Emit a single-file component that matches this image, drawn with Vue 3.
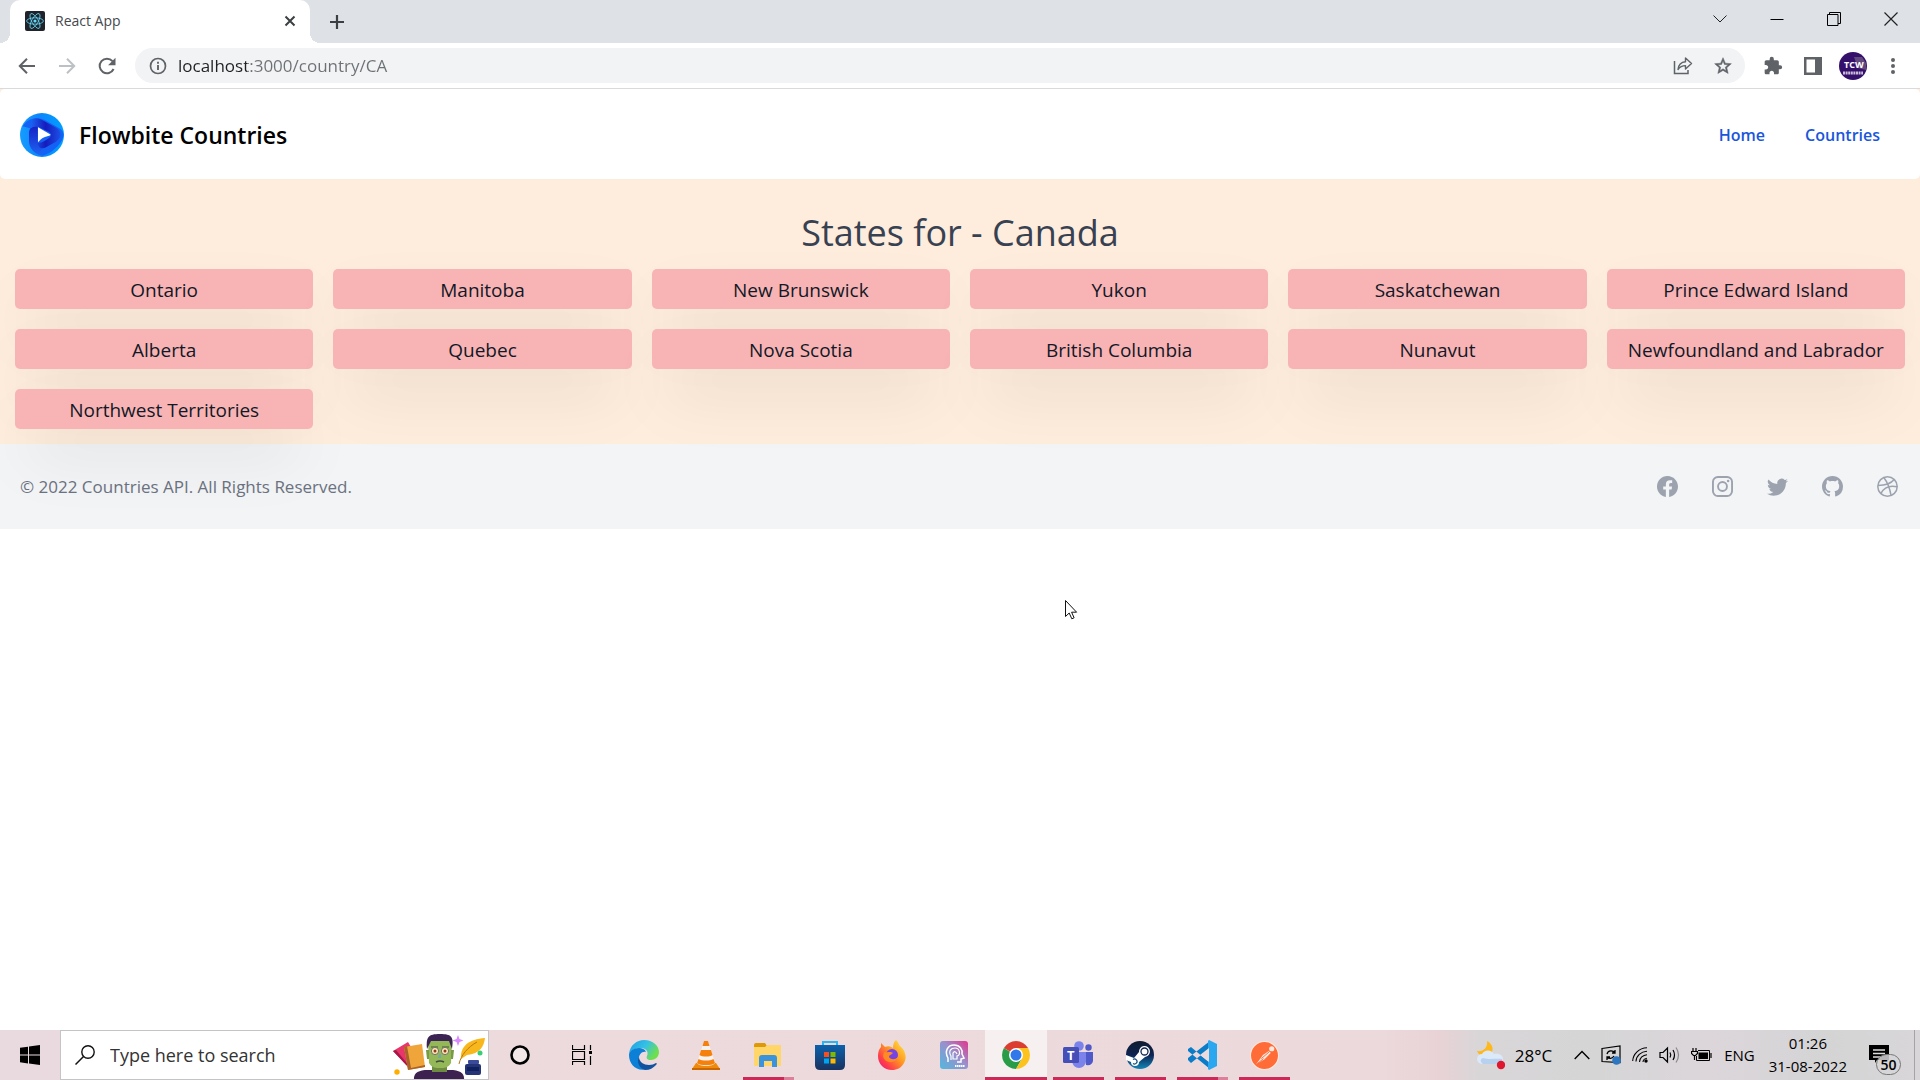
<script setup>
import { ref } from 'vue'

const address = ref('localhost:3000/country/CA')
const query = ref('')

const states = [
  'Ontario', 'Manitoba', 'New Brunswick', 'Yukon', 'Saskatchewan', 'Prince Edward Island',
  'Alberta', 'Quebec', 'Nova Scotia', 'British Columbia', 'Nunavut', 'Newfoundland and Labrador',
  'Northwest Territories',
]
</script>

<template>
  <div class="screen">
    <header class="browser">
      <div class="tabstrip">
        <div class="tab">
          <svg class="favicon" viewBox="0 0 20 20" aria-hidden="true">
            <rect width="20" height="20" rx="2" fill="#20232a" />
            <g fill="none" stroke="#61dafb" stroke-width="0.8">
              <ellipse cx="10" cy="10" rx="8.4" ry="3.2" />
              <ellipse cx="10" cy="10" rx="8.4" ry="3.2" transform="rotate(60 10 10)" />
              <ellipse cx="10" cy="10" rx="8.4" ry="3.2" transform="rotate(120 10 10)" />
            </g>
            <circle cx="10" cy="10" r="1.6" fill="#61dafb" />
          </svg>
          <span class="tab-title">React App</span>
          <button class="plain" aria-label="Close tab">
            <svg width="12" height="12" viewBox="0 0 12 12"><path d="M1.5 1.5l9 9M10.500 1.500l-9 9" stroke="#3c4043" stroke-width="2" /></svg>
          </button>
        </div>
        <button class="plain new-tab" aria-label="New tab">
          <svg width="16" height="16" viewBox="0 0 16 16"><path d="M8 1v14M1 8h14" stroke="#3c4043" stroke-width="2.200" /></svg>
        </button>
        <div class="window-controls">
          <button class="plain" aria-label="Search tabs">
            <svg width="14" height="8" viewBox="0 0 14 8"><path d="M.5.5L7 7 13.500.5" fill="none" stroke="#222" /></svg>
          </button>
          <button class="plain" aria-label="Minimize">
            <svg width="14" height="14" viewBox="0 0 14 14"><path d="M.5 7.500h13" stroke="#000" /></svg>
          </button>
          <button class="plain" aria-label="Restore">
            <svg width="14" height="14" viewBox="0 0 14 14"><path d="M.5 2.500h10.500v11H.5zM2.500 2.500v-2h11v11h-2.500" fill="none" stroke="#000" /></svg>
          </button>
          <button class="plain" aria-label="Close window">
            <svg width="14" height="14" viewBox="0 0 14 14"><path d="M.5.5l13 13M13.500.5l-13 13" stroke="#222" stroke-width="1.200" /></svg>
          </button>
        </div>
      </div>

      <div class="toolbar">
        <div class="nav-buttons">
          <button class="plain" aria-label="Back">
            <svg width="18" height="18" viewBox="0 0 18 18"><path d="M17 9H2.500M9 1.800L1.800 9 9 16.200" fill="none" stroke="#5f6368" stroke-width="2" /></svg>
          </button>
          <button class="plain" aria-label="Forward">
            <svg width="18" height="18" viewBox="0 0 18 18"><path d="M1 9h14.500M9 1.800L16.200 9 9 16.200" fill="none" stroke="#bdc1c6" stroke-width="2" /></svg>
          </button>
          <button class="plain" aria-label="Reload">
            <svg width="18" height="18" viewBox="0 0 18 18">
              <path d="M15.600 12A7.300 7.300 0 1 1 14.500 4.200" fill="none" stroke="#5f6368" stroke-width="2" />
              <path d="M17.500.8v7.400h-7.400z" fill="#5f6368" />
            </svg>
          </button>
        </div>
        <div class="omnibox">
          <svg width="18" height="18" viewBox="0 0 18 18" aria-hidden="true">
            <circle cx="9" cy="9" r="7.500" fill="none" stroke="#5f6368" stroke-width="1.700" />
            <path d="M9 8v5M9 4.800v1.900" stroke="#5f6368" stroke-width="1.900" />
          </svg>
          <input v-model="address" class="address" type="text" aria-label="Address" />
          <button class="plain" aria-label="Share">
            <svg width="20" height="19" viewBox="0 0 20 19">
              <path d="M1.500 5v12.500H15V14" fill="none" stroke="#5f6368" stroke-width="1.500" />
              <path d="M5 13.500c.5-5 3.500-7.500 7.500-7.800V2l6 5.500-6 5.500V9.600c-3.500 0-5.700 1.200-7.500 3.900z" fill="none" stroke="#5f6368" stroke-width="1.400" stroke-linejoin="round" />
            </svg>
          </button>
          <button class="plain" aria-label="Bookmark this tab">
            <svg width="20" height="20" viewBox="0 0 24 24">
              <path d="M22 9.240l-7.190-.62L12 2 9.190 8.630 2 9.240l5.460 4.730L5.820 21 12 17.270 18.180 21l-1.630-7.030L22 9.240zM12 15.400l-3.760 2.270 1-4.280-3.320-2.880 4.380-.38L12 6.100l1.710 4.040 4.380.38-3.320 2.880 1 4.280L12 15.400z" fill="#5f6368" stroke="#5f6368" stroke-width=".6" />
            </svg>
          </button>
        </div>
        <div class="tools">
          <button class="plain" aria-label="Extensions">
            <svg width="20" height="20" viewBox="0 0 24 24"><path fill="#5f6368" d="M20.500 11H19V7c0-1.100-.9-2-2-2h-4V3.500a2.500 2.500 0 0 0-5 0V5H4c-1.100 0-2 .9-2 2v3.800h1.500c1.500 0 2.700 1.200 2.700 2.700S5 16.200 3.500 16.200H2V20c0 1.100.9 2 2 2h3.800v-1.500c0-1.500 1.200-2.700 2.700-2.700s2.700 1.200 2.700 2.700V22H17c1.100 0 2-.9 2-2v-4h1.500a2.500 2.500 0 0 0 0-5z" /></svg>
          </button>
          <button class="plain" aria-label="Side panel">
            <svg width="18" height="18" viewBox="0 0 18 18"><path d="M0 0h18v18H0zM2.500 2.500v13H11v-13z" fill="#5f6368" fill-rule="evenodd" /></svg>
          </button>
          <button class="plain avatar" aria-label="Profile">
            <svg width="28" height="28" viewBox="0 0 28 28">
              <circle cx="14" cy="14" r="14" fill="#35106b" />
              <path d="M15 5h8l4 6v7l-8-2z" fill="#61497f" />
              <text x="5" y="16" font-size="9" font-weight="700" fill="#fff">TCW</text>
              <path d="M4 21h20" stroke="#c9bdd8" stroke-width="3" stroke-dasharray="2 .6" />
            </svg>
          </button>
          <button class="plain" aria-label="Menu">
            <svg width="6" height="18" viewBox="0 0 6 18" fill="#5f6368"><circle cx="3" cy="3" r="2" /><circle cx="3" cy="9" r="2" /><circle cx="3" cy="15" r="2" /></svg>
          </button>
        </div>
      </div>
    </header>

    <div class="page">
      <div class="site">
        <nav class="navbar">
          <a class="brand" href="#">
            <svg width="44" height="44" viewBox="0 0 132 132" aria-hidden="true">
              <defs>
                <linearGradient id="disc" x1="0" y1="0" x2="1" y2="0"><stop offset="0" stop-color="#159dff" /><stop offset=".45" stop-color="#0b85fb" /><stop offset="1" stop-color="#00a0ff" /></linearGradient>
                <linearGradient id="loop" x1="0" y1="0" x2="0" y2="1"><stop offset="0" stop-color="#1a22c4" /><stop offset="1" stop-color="#1c64f2" /></linearGradient>
                <linearGradient id="fold" x1="0" y1="0" x2="1" y2="0"><stop offset="0" stop-color="#1c64f2" /><stop offset=".5" stop-color="#161bbd" /><stop offset="1" stop-color="#1c50e4" /></linearGradient>
              </defs>
              <circle cx="66" cy="66" r="66" fill="url(#disc)" />
              <path d="M8 40C24 12 58 10 80 24l38 22c12 8 14 16 12 26-8 24-36 50-62 56-26-4-38-22-38-44V46z" fill="#1462f5" />
              <path d="M27 60c0-16 12-22 26-20v44c0 12 6 20 14 22l-6 20c-22-6-34-24-34-42z" fill="url(#loop)" />
              <path d="M34 22c10-8 24-6 34 0l38 21c22 12 20 32 2 43l-30 17c-14 8-25-2-25-14 10 2 20-4 34-14 8-5 8-13 0-18L54 41c-8-2-16 0-22 5z" fill="url(#fold)" />
              <path d="M54 43l36 21c4 2 0 4-8 6-10 2-18 6-28 18z" fill="#fff" />
            </svg>
            <span>Flowbite Countries</span>
          </a>
          <div class="links">
            <a href="#home">Home</a>
            <a href="#countries">Countries</a>
          </div>
        </nav>

        <main class="content">
          <h1>States for - Canada</h1>
          <ul class="states">
            <li v-for="name in states" :key="name">{{ name }}</li>
          </ul>
        </main>
      </div>

      <footer class="footer">
        <span>© 2022 Countries API. All Rights Reserved.</span>
        <div class="social">
          <a href="#facebook" aria-label="Facebook">
            <svg viewBox="0 0 16 16"><path d="M16 8.049c0-4.446-3.582-8.050-8-8.050C3.580 0-.002 3.603-.002 8.050c0 4.017 2.926 7.347 6.750 7.951v-5.625h-2.030V8.050H6.750V6.275c0-2.017 1.195-3.131 3.022-3.131.876 0 1.791.157 1.791.157v1.980h-1.009c-.993 0-1.303.621-1.303 1.258v1.510h2.218l-.354 2.326H9.250V16c3.824-.604 6.750-3.934 6.750-7.951z" /></svg>
          </a>
          <a href="#instagram" aria-label="Instagram">
            <svg viewBox="0 0 16 16"><g fill="none" stroke="currentColor" stroke-width="1.450"><rect x=".72" y=".72" width="14.560" height="14.560" rx="3.900" /><circle cx="8" cy="8" r="3.400" /></g><circle cx="12.270" cy="3.730" r=".96" /></svg>
          </a>
          <a href="#twitter" aria-label="Twitter">
            <svg viewBox="0 0 16 16"><path d="M5.026 15c6.038 0 9.341-5.003 9.341-9.334 0-.14 0-.282-.006-.422A6.685 6.685 0 0 0 16 3.542a6.658 6.658 0 0 1-1.889.518 3.301 3.301 0 0 0 1.447-1.817 6.533 6.533 0 0 1-2.087.793A3.286 3.286 0 0 0 7.875 6.030a9.325 9.325 0 0 1-6.767-3.429 3.289 3.289 0 0 0 1.018 4.382A3.323 3.323 0 0 1 .64 6.575v.045a3.288 3.288 0 0 0 2.632 3.218 3.203 3.203 0 0 1-.865.115 3.230 3.230 0 0 1-.614-.057 3.283 3.283 0 0 0 3.067 2.277A6.588 6.588 0 0 1 .78 13.580a6.320 6.320 0 0 1-.78-.045A9.344 9.344 0 0 0 5.026 15z" /></svg>
          </a>
          <a href="#github" aria-label="GitHub">
            <svg viewBox="0 0 16 16"><path d="M8 0C3.580 0 0 3.580 0 8c0 3.540 2.290 6.530 5.470 7.590.4.070.55-.17.55-.38 0-.19-.01-.82-.01-1.490-2.010.37-2.530-.49-2.690-.94-.09-.23-.48-.94-.82-1.130-.28-.15-.68-.52-.01-.53.63-.01 1.080.58 1.230.82.72 1.210 1.870.87 2.330.66.070-.52.28-.87.51-1.070-1.780-.2-3.640-.89-3.640-3.950 0-.87.31-1.590.82-2.150-.08-.2-.36-1.020.08-2.120 0 0 .67-.21 2.200.82.64-.18 1.320-.27 2-.27.68 0 1.360.09 2 .27 1.530-1.040 2.200-.82 2.200-.82.44 1.100.16 1.920.08 2.120.51.56.82 1.270.82 2.150 0 3.070-1.870 3.750-3.650 3.950.29.25.54.73.54 1.480 0 1.070-.01 1.930-.01 2.200 0 .21.15.46.55.38A8.012 8.012 0 0 0 16 8c0-4.420-3.580-8-8-8z" /></svg>
          </a>
          <a href="#dribbble" aria-label="Dribbble">
            <svg viewBox="0 0 16 16"><g fill="none" stroke="currentColor" stroke-width="1.150"><circle cx="8" cy="8" r="7.400" /><path d="M5.200 1.200c2.500 3.300 4.400 7.500 5.500 13.500M.7 7.200c5.500 0 9.600-1 12.400-4.500M2.900 13.400c2.300-4.600 6.700-6.500 12.500-5.200" /></g></svg>
          </a>
        </div>
      </footer>

      <svg class="pointer" width="13" height="20" viewBox="0 0 13 20" aria-hidden="true">
        <path d="M.5.5v16l3.700-3.500 2.600 5.800 2.300-1-2.500-5.600h5z" fill="#fff" stroke="#111" />
      </svg>
    </div>

    <div class="taskbar">
      <button class="start" aria-label="Start">
        <svg width="20" height="20" viewBox="0 0 20 20"><path d="M0 2.800l8-1.100v7.900H0zM9 1.500L20 0v9.600H9zM0 10.500h8v7.900l-8-1.100zM9 10.500h11V20L9 18.500z" /></svg>
      </button>
      <label class="search">
        <svg width="20" height="20" viewBox="0 0 20 20" aria-hidden="true"><circle cx="13" cy="7" r="6.200" fill="none" stroke="#111" stroke-width="1.400" /><path d="M8.500 11.500L.5 19.500" stroke="#111" stroke-width="1.500" /></svg>
        <input v-model="query" type="text" placeholder="Type here to search" aria-label="Search" />
        <svg class="doodle" width="94" height="46" viewBox="0 0 94 46" aria-hidden="true">
          <path d="M1 18L16 9l15 25-13 2z" fill="#e8366a" />
          <path d="M1 18l3-1 15 18-1 1z" fill="#a81748" />
          <path d="M12 14l18-3 3 23-17 3z" fill="#f0a53a" />
          <path d="M12 14l3-1 4 22 14-3v2l-17 3z" fill="#a9622a" />
          <circle cx="5" cy="39" r="2.700" fill="#ffae00" />
          <path d="M22 48c-1-8 4-11 14-11h22c10 0 15 3 14 11z" fill="#3d214f" />
          <path d="M40 31h15v8H40z" fill="#6e8c3f" />
          <path d="M36 8h24l-1 22c-3 5-7 5-11 5s-8 0-11-5z" fill="#94b757" />
          <path d="M34 17h3v9h-2zM59 17h3l-1 9h-2z" fill="#789b45" />
          <path d="M35 16C34 4 36 1 48 1s14 3 12 15l-3-8H39z" fill="#3b2453" />
          <path d="M39 14h7M50 14h7" stroke="#5c7c38" stroke-width="1.400" />
          <g fill="#ffe9b0" stroke="#716e79" stroke-width="1"><circle cx="43" cy="18" r="3.600" /><circle cx="53" cy="18" r="3.600" /></g>
          <circle cx="43" cy="18" r="1.500" fill="#8a3b20" /><circle cx="53" cy="18" r="1.500" fill="#8a3b20" />
          <path d="M47 21h2v4h-3z" fill="#78a8a0" /><path d="M44 29q4-2 8 0" fill="none" stroke="#3e4a46" stroke-width="1.500" />
          <path d="M66 2l1.500 4 4 1.500-4 1.500-1.500 4-1.500-4-4-1.500 4-1.500z" fill="#d78bff" />
          <path d="M69 26c-1-13 8-20 24-21-1 8-5 16-18 17z" fill="#f8b71c" />
          <path d="M67 31c2-9 9-17 18-22" fill="none" stroke="#b97713" />
          <circle cx="88" cy="20" r="2.500" fill="#37cf73" />
          <rect x="76" y="27" width="11" height="4" rx="1" fill="#3b4b9a" /><rect x="73" y="31" width="16" height="11" rx="2" fill="#253477" />
          <path d="M75 34h12v4H75z" fill="#10205e" />
        </svg>
      </label>

      <div class="apps">
        <button class="app" aria-label="Cortana">
          <svg width="20" height="20" viewBox="0 0 20 20"><circle cx="10" cy="10" r="8.500" fill="#f3e7e8" stroke="#000" stroke-width="2.600" /></svg>
        </button>
        <button class="app" aria-label="Task View">
          <svg width="20" height="20" viewBox="0 0 20 20"><path d="M.5 0v4.500h12V0M.5 6.500h12v8H.5zM.5 20v-3.500h12V20M18.500 0v5M18.500 11v9" fill="none" stroke="#000" stroke-width="1.200" /><path d="M17 6h3v3h-3z" /></svg>
        </button>
        <button class="app" aria-label="Edge">
          <svg width="30" height="30" viewBox="0 0 30 30">
            <defs>
              <linearGradient id="edge-top" x1="0" y1="0" x2="1" y2=".5"><stop offset="0" stop-color="#1b9de2" /><stop offset=".55" stop-color="#35c1e6" /><stop offset="1" stop-color="#6fe04b" /></linearGradient>
            </defs>
            <path d="M0 14C1 5 8 0 15 0c9 0 15 6 15 12 0 5-4 8-8 8-4 0-5-2-4-4 2-4-1-8-6-8C6 8 1 11 0 14z" fill="url(#edge-top)" />
            <path d="M0 15c0-4 5-7 10-7 3 0 6 1 7 4-5-1-8 4-7 9 1 4 4 7 8 8C8 32 0 25 0 15z" fill="#0c7fd6" />
            <path d="M10 17c0 5 5 8 10 8 3 0 5-1 7-2 1 0 1 1 0 2-3 3-6 5-11 5-5-1-9-8-6-13z" fill="#12539f" />
          </svg>
        </button>
        <button class="app" aria-label="VLC">
          <svg width="28" height="30" viewBox="0 0 28 30">
            <path d="M4 23h20l4 6H0z" fill="#f08a0c" /><path d="M0 28h28v2H0z" fill="#c96800" />
            <path d="M12 1h4l7 22c-2 4-16 4-18 0z" fill="#f4f1ee" />
            <path d="M12 1h4l1.500 5h-7zM9 10h10l1.500 5c-3 2-10 2-13 0zM6.500 19c4 2 11 2 15 0l1.500 4c-3 3-15 3-18 0z" fill="#f5810c" />
          </svg>
        </button>
        <button class="app open stacked" aria-label="File Explorer">
          <svg width="28" height="24" viewBox="0 0 28 24">
            <path d="M0 2q0-2 2-2h9l2 3h-1v4H0z" fill="#dd9a08" /><path d="M0 4h11l2-2h14v20q0 1-1 1H1q-1 0-1-1z" fill="#ffd667" />
            <path d="M5 24V15q0-3 3-3h12q3 0 3 3v9h-5v-6h-8v6z" fill="#3b93dc" />
          </svg>
        </button>
        <button class="app" aria-label="Microsoft Store">
          <svg width="30" height="30" viewBox="0 0 30 30">
            <defs><linearGradient id="bag" x1="0" y1="0" x2="0" y2="1"><stop offset="0" stop-color="#0c61ad" /><stop offset="1" stop-color="#19335f" /></linearGradient></defs>
            <path d="M8 6V2h14v4" fill="none" stroke="#27b6f2" stroke-width="2" /><path d="M0 5h30v20q0 5-5 5H5q-5 0-5-5z" fill="url(#bag)" />
            <path d="M9 12h5v5H9z" fill="#f25022" /><path d="M15.500 12h5v5h-5z" fill="#7fba00" /><path d="M9 18.500h5v5H9z" fill="#00a4ef" /><path d="M15.500 18.500h5v5h-5z" fill="#ffb900" />
          </svg>
        </button>
        <button class="app" aria-label="Firefox">
          <svg width="28" height="30" viewBox="0 0 28 30">
            <defs><linearGradient id="fox" x1="1" y1="0" x2="0" y2="1"><stop offset="0" stop-color="#fff04a" /><stop offset=".45" stop-color="#ff9520" /><stop offset=".75" stop-color="#ff3c4d" /><stop offset="1" stop-color="#e3177e" /></linearGradient></defs>
            <path d="M18 0c3 3 3 5 4 6 6 5 7 12 4 17-3 5-7 7-12 7C6 30 0 24 0 16c0-4 1-7 3-9V3l4 4c4-2 7 0 8 1 0-4 1-6 3-8z" fill="url(#fox)" />
            <circle cx="14" cy="15" r="6" fill="#7542e5" />
            <path d="M6 12c5 1 6-1 9 1-2 2-4 2-4 4 2 3 6 3 9 0-1 6-13 8-15-1z" fill="#ff8b22" />
          </svg>
        </button>
        <button class="app" aria-label="System assistant">
          <svg width="28" height="28" viewBox="0 0 28 28">
            <defs><linearGradient id="tile" x1="0" y1="1" x2="1" y2="0"><stop offset="0" stop-color="#50b9df" /><stop offset=".55" stop-color="#9b8fcb" /><stop offset="1" stop-color="#e2348d" /></linearGradient></defs>
            <rect width="28" height="28" rx="3" fill="url(#tile)" />
            <path d="M8 21v-4C4 10 8 4 14 4s9 5 8 9l2 4-3 1v3h-4" fill="none" stroke="#fff" stroke-width="1.500" />
            <path d="M11 19v-4c-3-5 0-8 4-8 5 0 6 7 2 8v3h-4v-6q2-3 4 1" fill="none" stroke="#fff" stroke-width="1.200" />
            <path d="M15 25h10" stroke="#fff" stroke-width="2" stroke-dasharray="1.500 .5" />
          </svg>
        </button>
        <button class="app open active" aria-label="Chrome">
          <svg width="28" height="28" viewBox="0 0 28 28">
            <path d="M14 14L1.900 7A14 14 0 0 1 26.100 7z" fill="#dc3d31" /><path d="M14 14h-1L1.900 7A14 14 0 0 0 14 28l6-10.500z" fill="#2a9b46" /><path d="M14 7h12.100A14 14 0 0 1 14 28l6-10.500z" fill="#fcc31e" />
            <circle cx="14" cy="14" r="7" fill="#fff" /><circle cx="14" cy="14" r="5.500" fill="#3179eb" />
          </svg>
        </button>
        <button class="app open" aria-label="Teams">
          <svg width="30" height="28" viewBox="0 0 30 28">
            <circle cx="25.500" cy="6.500" r="3.200" fill="#5059c9" /><path d="M21 11h9v9q-1 5-7 4z" fill="#5059c9" />
            <circle cx="16" cy="5" r="4.800" fill="#7b83eb" /><path d="M9 11h14v9q-1 7-7 7t-7-7z" fill="#7b83eb" />
            <rect y="6" width="16" height="16" rx="1.500" fill="#464eb8" /><text x="4" y="19" font-size="13" font-weight="700" fill="#fff">T</text>
          </svg>
        </button>
        <button class="app open" aria-label="Steam">
          <svg width="28" height="28" viewBox="0 0 28 28">
            <defs><linearGradient id="steam" x1="0" y1="0" x2="0" y2="1"><stop offset="0" stop-color="#111d2e" /><stop offset=".5" stop-color="#0d2352" /><stop offset="1" stop-color="#1387b8" /></linearGradient></defs>
            <circle cx="14" cy="14" r="14" fill="url(#steam)" />
            <path d="M0 14l8 3 5-6a5.500 5.500 0 1 1 6 5l-6 5a4 4 0 0 1-8 0l-5-2z" fill="#fff" /><circle cx="18.500" cy="10.500" r="3.500" fill="#fff" stroke="#122750" stroke-width="1.300" /><path d="M7 18.500a2.500 2.500 0 1 1 0 4" fill="none" stroke="#184f82" stroke-width="1.200" />
          </svg>
        </button>
        <button class="app open stacked" aria-label="Visual Studio Code">
          <svg width="30" height="30" viewBox="0 0 30 30">
            <path d="M1 9l3-2 19 16v6L1 11zM1 20l3 3L23 8V1L1 18z" fill="#0b7cc7" /><path d="M22 0l8 4v22l-8 4-1-1V1z" fill="#2aa7ee" /><path d="M22 8v14l-9-7z" fill="#eddadd" />
          </svg>
        </button>
        <button class="app open" aria-label="Postman">
          <svg width="29" height="29" viewBox="0 0 28 28">
            <circle cx="14" cy="14" r="14" fill="#ffe8df" /><circle cx="14" cy="14" r="13" fill="#ff6c37" />
            <circle cx="21" cy="7.500" r="2.500" fill="#ffe8df" /><path d="M18.500 9.500l-6 4L6 22.500l8-5 6-6z" fill="#ffe8df" /><path d="M19 10l-8 7M7 22l6-5" stroke="#e85b2b" stroke-width=".8" />
          </svg>
        </button>
      </div>

      <div class="tray">
        <button class="plain weather">
          <svg width="28" height="30" viewBox="0 0 28 30" aria-hidden="true">
            <path d="M10 1c6 3 8 10 2 15C7 17 2 16 0 11c6 1 11-3 10-10z" fill="#ffb81c" />
            <path d="M5 24a5 5 0 0 1 0-10 7 7 0 0 1 12 0c6-1 9 2 9 5s-3 5-6 5z" fill="#dbe9f8" /><path d="M6 24c-3-2-3-5 0-6 7 2 13 0 19 1 1 3-2 5-5 5z" fill="#b7d1ef" />
            <circle cx="24" cy="25" r="4.200" fill="#e0162f" />
          </svg>
          <span>28°C</span>
        </button>
        <div class="status">
          <svg width="16" height="10" viewBox="0 0 16 10"><path d="M.7 9L8 1.500 15.300 9" fill="none" stroke="#000" stroke-width="1.400" /></svg>
          <svg width="20" height="20" viewBox="0 0 20 20"><path d="M1 3.500L19 1v16.500L1 16.500z" fill="none" stroke="#000" stroke-width="1.200" /><path d="M6 9c1-4 6-4 8-1M14 5v3h-3M13 11c-2 3-5 3-7 1M6 15v-3h3" fill="none" stroke="#000" stroke-width="1.300" /><circle cx="15.500" cy="15.500" r="4.300" fill="#2f76c0" /></svg>
          <svg width="16" height="16" viewBox="0 0 16 16"><g fill="none" stroke="#000" stroke-width="1.100"><path d="M.7 14C1 7 7 1 15 .7M4 14.500C4 9 9 4.500 15 4.200M7.500 15c0-4 3.500-7 7.500-7.300M11 15c0-2 2-3.700 4-3.800" /></g><circle cx="14" cy="14" r="1.700" /></svg>
          <svg width="21" height="18" viewBox="0 0 21 18"><g fill="none" stroke="#000" stroke-width="1.200"><path d="M1 6.500h3L8.500 2v14L4 11.500H1zM11 6.500q1.500 2.500 0 5M14 4q3 5 0 10" /><path d="M17 1.500q5 7.500 0 15" stroke="#8a8889" /></g></svg>
          <svg width="21" height="14" viewBox="0 0 21 14"><path d="M7 2.500h11.500v10h-13V8" fill="none" stroke="#000" /><path d="M7.500 4.500h9.500v6.500H7.500z" /><path d="M20 5v5M2 0v3M5 0v3M.5 3.500h6v2l-2 2h-2l-2-2zM3.500 7v5" fill="none" stroke="#000" stroke-width="1.200" /></svg>
          <span class="lang">ENG</span>
        </div>
        <div class="clock"><span>01:26</span><span>31-08-2022</span></div>
        <button class="plain notices" aria-label="Notifications, 50 new">
          <svg width="20" height="20" viewBox="0 0 20 20"><path d="M0 0h20v15H8l-2 3v-3H0z" /><path d="M4 5h12M4 8.500h12M4 12h8" stroke="#ddd" stroke-width="1.300" /></svg>
          <span class="badge">50</span>
        </button>
      </div>
    </div>
  </div>
</template>

<style>
body {
  margin: 0;
}
</style>

<style scoped>
* {
  box-sizing: border-box;
}

.screen {
  display: flex;
  flex-direction: column;
  min-height: 100vh;
  background: #fff;
  color: #000;
  font-family: "Open Sans", "Noto Sans", sans-serif;
}

svg {
  display: block;
  flex: none;
}

a {
  color: inherit;
  text-decoration: none;
}

button,
input {
  border: 0;
  padding: 0;
  background: none;
  color: inherit;
  font: inherit;
  outline: none;
}

.plain {
  display: flex;
  align-items: center;
  justify-content: center;
}

/* Browser chrome */
.tabstrip {
  display: flex;
  align-items: stretch;
  height: 43px;
  padding-left: 10px;
  background: #dee1e6;
}

.tab {
  position: relative;
  display: flex;
  align-items: center;
  width: 300px;
  padding: 0 14px 2px 15px;
  border-radius: 10px 10px 0 0;
  background: #fff;
}

.tab::before,
.tab::after {
  content: "";
  position: absolute;
  bottom: 0;
  width: 10px;
  height: 10px;
}

.tab::before {
  right: 100%;
  background: radial-gradient(circle at 0 0, #dee1e6 10px, #fff 10px);
}

.tab::after {
  left: 100%;
  background: radial-gradient(circle at 100% 0, #dee1e6 10px, #fff 10px);
}

.favicon {
  width: 20px;
  height: 20px;
}

.tab-title {
  flex: 1;
  padding-left: 10px;
  color: #45494d;
  font-size: 14px;
}

.new-tab {
  width: 54px;
}

.window-controls {
  display: flex;
  margin-left: auto;
  padding-right: 1px;
  height: 37px;
}

.window-controls .plain {
  width: 57px;
}

.toolbar {
  display: flex;
  align-items: center;
  height: 46px;
  border-bottom: 1px solid #d9dadc;
  background: #fff;
}

.nav-buttons {
  display: flex;
  width: 135px;
  padding-left: 7px;
}

.nav-buttons .plain {
  width: 40px;
}

.omnibox {
  display: flex;
  flex: 1;
  align-items: center;
  gap: 20px;
  height: 35px;
  padding: 0 12px 0 14px;
  border-radius: 18px;
  background: #f1f3f4;
}

.address {
  flex: 1;
  margin-left: -9px;
  height: 30px;
  background: linear-gradient(90deg, #202124 69px, #6d7175 69px);
  background-clip: text;
  -webkit-background-clip: text;
  color: transparent;
  font-size: 17px;
}

.tools {
  display: flex;
  align-items: center;
  width: 175px;
  padding-left: 8px;
}

.tools .plain {
  width: 40px;
}

/* Web page */
.page {
  position: relative;
  flex: 1;
}

.site {
  position: relative;
  z-index: 1;
  background: #feecdc;
}

.navbar {
  display: flex;
  align-items: center;
  justify-content: space-between;
  height: 90px;
  padding: 2px 40px 0 20px;
  border-radius: 5px;
  background: #fff;
}

.brand {
  display: flex;
  align-items: center;
  gap: 15px;
  font-size: 23px;
  font-weight: 600;
}

.links {
  display: flex;
  gap: 40px;
  color: #1a56db;
  font-size: 16px;
  font-weight: 600;
}

.content {
  padding: 29px 15px 15px;
}

h1 {
  margin: 0 0 11px;
  color: #374151;
  font-size: 36px;
  font-weight: 400;
  line-height: 50px;
  text-align: center;
}

.states {
  display: grid;
  grid-template-columns: repeat(6, 1fr);
  gap: 20px;
  margin: 0;
  padding: 0;
  list-style: none;
}

.states li {
  padding-top: 2px;
  border-radius: 5px;
  background: #f8b4b4;
  box-shadow: 0 31px 62px -15px rgba(0, 0, 0, 0.25);
  color: #111827;
  font-size: 19px;
  line-height: 38px;
  text-align: center;
}

.footer {
  display: flex;
  align-items: center;
  justify-content: space-between;
  height: 85px;
  padding: 0 22px 0 20px;
  background: #f3f4f6;
  color: #6b7280;
  font-size: 17px;
}

.social {
  display: flex;
  gap: 34px;
  color: #9ca3af;
}

.social svg {
  width: 21px;
  height: 21px;
  fill: currentColor;
}

.pointer {
  position: absolute;
  left: 1065px;
  top: 511px;
}

/* Taskbar */
.taskbar {
  display: flex;
  height: 50px;
  background: linear-gradient(90deg, #e9dadf 0, #eddadd 25%, #ecd9dc 72%, #e8d2d5 75%, #d9d6d8 77%, #d5d5d6 83%, #dcd6da 89%, #d4d4d5 95%, #d8d6d8 100%);
}

.start {
  display: flex;
  align-items: center;
  justify-content: center;
  width: 60px;
}

.search {
  display: flex;
  align-items: center;
  width: 429px;
  padding-left: 14px;
  border: 1px solid #c4c4c6;
  background: #fff;
  overflow: hidden;
}

.search input {
  flex: 1;
  min-width: 0;
  padding-left: 15px;
  font-size: 18px;
}

.search input::placeholder {
  color: #333;
  opacity: 1;
}

.doodle {
  align-self: flex-end;
  margin-right: 2px;
}

.apps {
  display: flex;
}

.app {
  position: relative;
  display: flex;
  align-items: center;
  justify-content: center;
  width: 62px;
}

.app.active {
  background: #f6f0f1;
}

.app.open::after {
  content: "";
  position: absolute;
  right: 5px;
  bottom: 0;
  left: 6px;
  height: 3px;
  background: #cb2957;
}

.app.stacked::after {
  background: linear-gradient(90deg, #cb2957 41px, #dd809b 41px);
}

.app.active::after {
  right: 0;
  left: 0;
}

.tray {
  display: flex;
  align-items: center;
  margin-left: auto;
  margin-right: 5px;
  border-right: 1px solid #a5a3a5;
}

.weather {
  gap: 10px;
  font-size: 17px;
}

.status {
  display: flex;
  align-items: center;
  gap: 11px;
  margin-left: 22px;
}

.lang {
  margin-left: 1px;
  font-size: 15px;
}

.clock {
  display: flex;
  flex-direction: column;
  align-items: center;
  margin-left: 14px;
  font-size: 15px;
  line-height: 23px;
}

.notices {
  position: relative;
  margin: 0 25px 0 22px;
}

.badge {
  position: absolute;
  left: 7px;
  top: 9px;
  width: 25px;
  height: 21px;
  border: 1px solid #777;
  border-radius: 11px;
  background: rgba(214, 213, 215, 0.85);
  font-size: 14px;
  font-weight: 600;
  line-height: 19px;
  text-align: center;
}
</style>
